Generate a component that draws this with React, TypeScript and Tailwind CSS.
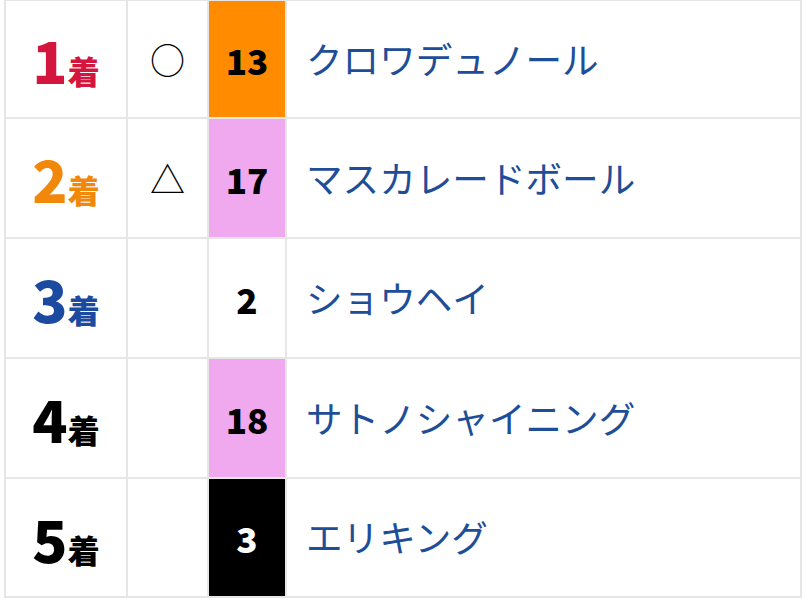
const rows = [
  { rank: 1, rankColor: "text-[#d4163f]", mark: "○", num: 13, numBg: "bg-[#ff8c00]", numText: "text-black", name: "クロワデュノール" },
  { rank: 2, rankColor: "text-[#f2880a]", mark: "△", num: 17, numBg: "bg-[#f0a8ef]", numText: "text-black", name: "マスカレードボール" },
  { rank: 3, rankColor: "text-[#1c4aa0]", mark: "", num: 2, numBg: "bg-white", numText: "text-black", name: "ショウヘイ" },
  { rank: 4, rankColor: "text-black", mark: "", num: 18, numBg: "bg-[#f0a8ef]", numText: "text-black", name: "サトノシャイニング" },
  { rank: 5, rankColor: "text-black", mark: "", num: 3, numBg: "bg-black", numText: "text-white", name: "エリキング" },
];

export default function App() {
  return (
    <div className="w-[807px] h-[599px] overflow-hidden bg-white font-['Noto_Sans_CJK_JP',sans-serif]">
      <div className="ml-1 mt-[-1px] w-[798px] grid grid-cols-[122px_81px_78px_515px] grid-rows-[118px_120px_120px_120px_119px] border-l-2 border-t-2 border-[#e6e6e6]">
        {rows.map((r) => (
          <div key={r.rank} className="contents">
            <div className="flex items-center justify-center border-r-2 border-b-2 border-[#e6e6e6]">
              <span className={`flex items-baseline font-black ${r.rankColor}`}>
                <span className="text-[58px] leading-none">{r.rank}</span>
                <span className="text-[32px] leading-none">着</span>
              </span>
            </div>
            <div className="flex items-center justify-center border-r-2 border-b-2 border-[#e6e6e6] pb-[2px] text-[35px] leading-none text-black">
              {r.mark}
            </div>
            <div className={`flex items-center justify-center border-r-2 border-b-2 border-[#e6e6e6] ${r.numBg}`}>
              <span className={`text-[35px] leading-none font-black ${r.numText}`}>{r.num}</span>
            </div>
            <div className="flex items-center border-r-2 border-b-2 border-[#e6e6e6] pl-[19px]">
              <span className="text-[36.6px] leading-none text-[#1f4e98]">{r.name}</span>
            </div>
          </div>
        ))}
      </div>
    </div>
  );
}
